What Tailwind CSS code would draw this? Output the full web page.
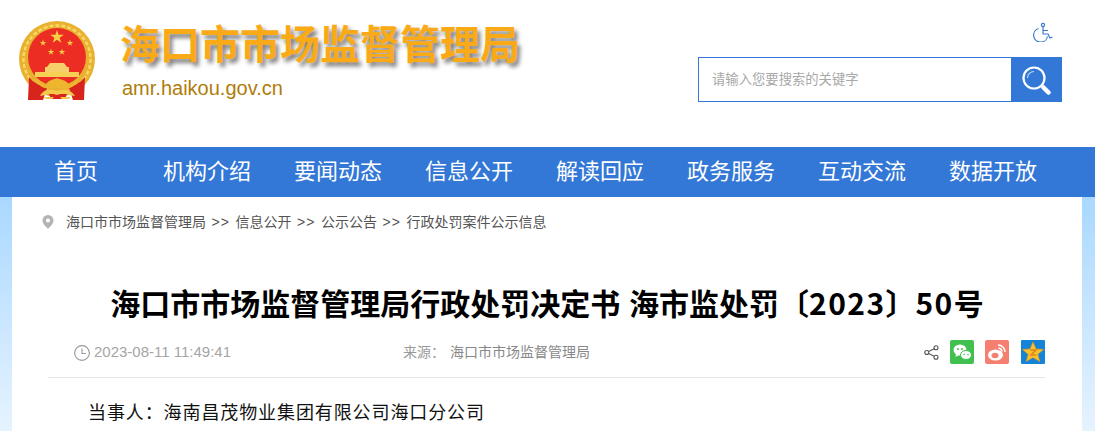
<!DOCTYPE html>
<html lang="zh-CN">
<head>
<meta charset="utf-8">
<title>海口市市场监督管理局行政处罚决定书</title>
<script src="https://cdn.jsdelivr.net/npm/@tailwindcss/browser@4"></script>
</head>
<body class="bg-white overflow-hidden font-['Liberation_Sans','Noto_Sans_CJK_SC',sans-serif]">
  <!-- header -->
  <header class="h-[147px] flex">
    <svg class="w-[78px] h-[82px] ml-[19px] mt-[20px] shrink-0" viewBox="0 0 78 82">
      <defs>
        <polygon id="star" fill="#f7cf45" points="0,-10 2.200,-3.100 9.500,-3.100 3.600,1.200 5.900,8.100 0,3.800 -5.900,8.100 -3.600,1.200 -9.500,-3.100 -2.200,-3.100"/>
      </defs>
      <circle cx="38" cy="39" r="38" fill="#e8b130"/>
      <circle cx="38" cy="39" r="33.500" fill="none" stroke="#f8d763" stroke-width="2.500" stroke-dasharray="4 2"/>
      <circle cx="38" cy="37" r="29" fill="#ec2d24"/>
      <use href="#star" transform="translate(38 17) scale(.72)"/>
      <use href="#star" transform="translate(24 23) scale(.34)"/>
      <use href="#star" transform="translate(51 23) scale(.34)"/>
      <use href="#star" transform="translate(32 32) scale(.34)"/>
      <use href="#star" transform="translate(43 32) scale(.34)"/>
      <path fill="#f6cf6b" d="M31 43 h14 l3 4 h-20z M26 47 h24 v5 H26z"/>
      <path fill="#f6cf55" d="M16 52 h44 v5 H16z"/>
      <path fill="#fff" d="M6 77 H72 V82 H6z"/>
      <path fill="#d8241c" d="M10 57 C16 64 22 66 28 68 L24 80 H9z M66 57 C60 64 54 66 50 68 L54 80 H65z M30 74 H48 L46 79 H32z"/>
      <path fill="none" stroke="#eeb62f" stroke-width="2.400" d="M17 60 C22 66 27 68 31 67 M59 60 C54 66 49 68 45 67"/>
      <path fill="#eeb62f" d="M27 64 C31 59 34 60 38 58 C42 60 45 59 50 64 L46 68 H31z"/>
      <path fill="#f4c94a" d="M21 76 C25 69 31 69 38 71 C45 69 51 69 56 76 L50 75 C46 73 42 74 38 75 C34 74 30 73 26 75z"/>
      <path fill="#f4c94a" d="M25 77 H35 L33 79 H27z M41 77 H52 L50 79 H43z"/>
    </svg>
    <div class="ml-[23px] mt-[20px] w-[420px] shrink-0">
      <h1 class="text-[40px] leading-[50px] font-bold text-[#faaa17] whitespace-nowrap [text-shadow:3px_4px_4px_rgba(0,0,0,0.5)]">海口市市场监督管理局</h1>
      <p class="text-[20px] leading-[24px] mt-[6px] pl-[2px] text-[#b07c0a]">amr.haikou.gov.cn</p>
    </div>
    <div class="ml-auto mr-[33px] w-[364px] flex flex-col items-end">
      <svg class="w-[20px] h-[20px] mt-[22px] mr-[9px]" viewBox="0 0 20 20" fill="none" stroke="#3a7bd5" stroke-width="1.200">
        <circle cx="10" cy="3" r="1.600"/>
        <path d="M5.500 6.500 A7 7 0 1 0 14.500 14.500"/>
        <path d="M10 5 V12 H15 L17 16 L19.500 15 M10 8.500 H15"/>
      </svg>
      <form class="mt-[15px] w-[364px] h-[45px] flex border border-[#3378d6]">
        <input type="text" placeholder="请输入您要搜索的关键字" class="flex-1 min-w-0 pl-[13px] text-[13.330px] outline-none placeholder:text-[#a8a8a8] bg-white">
        <button type="button" class="w-[50px] bg-[#3378d6] flex items-center justify-center">
          <svg class="w-[30px] h-[30px]" viewBox="0 0 30 30" fill="none" stroke="#fff">
            <circle cx="13" cy="13" r="10.500" stroke-width="2.200"/>
            <path d="M6.500 13 A6.500 6.500 0 0 1 13 6.500" stroke-width="1.200" opacity=".7"/>
            <path d="M22.500 22.500 L27.500 27.500" stroke-width="4.500" stroke-linecap="round"/>
          </svg>
        </button>
      </form>
    </div>
  </header>

  <!-- nav -->
  <nav class="h-[50px] bg-[#3378d6] flex pl-[54px] text-white text-[22px] leading-[50px] whitespace-nowrap">
    <a class="w-[109px]">首页</a>
    <a class="w-[131px]">机构介绍</a>
    <a class="w-[131px]">要闻动态</a>
    <a class="w-[131px]">信息公开</a>
    <a class="w-[131px]">解读回应</a>
    <a class="w-[131px]">政务服务</a>
    <a class="w-[131px]">互动交流</a>
    <a class="w-[89px]">数据开放</a>
  </nav>

  <!-- page body -->
  <div class="h-[234px] pl-[12px] pr-[13px] bg-linear-to-b from-[#a9d8ff] to-[#e6f3ff] overflow-hidden">
    <main class="bg-white h-full">
      <div class="flex items-center h-[50px] pl-[30px] text-[14px] text-[#555]">
        <svg class="w-[12px] h-[14px] mr-[12px]" viewBox="0 0 12 14">
          <path fill-rule="evenodd" fill="#b4b4b4" d="M6 0 A5.500 5.500 0 0 1 11.500 5.500 C11.500 9 8 11.500 6 14 C4 11.500 .5 9 .5 5.500 A5.500 5.500 0 0 1 6 0z M6 3.500 a2 2 0 1 0 .01 0z"/>
        </svg>
        <span>海口市市场监督管理局</span>
        <span class="w-[29.500px] text-center tracking-[1px]">&gt;&gt;</span>
        <span>信息公开</span>
        <span class="w-[29.500px] text-center tracking-[1px]">&gt;&gt;</span>
        <span>公示公告</span>
        <span class="w-[29.500px] text-center tracking-[1px]">&gt;&gt;</span>
        <span>行政处罚案件公示信息</span>
      </div>
      <h2 class="mt-[37px] text-center text-[30px] leading-[36px] font-bold text-black whitespace-nowrap [word-spacing:2px] font-['Noto_Sans_CJK_SC',sans-serif]">海口市市场监督管理局行政处罚决定书 海市监处罚〔<span class="tracking-[1.400px]">2023</span>〕<span class="tracking-[1.400px]">50</span>号</h2>
      <div class="ml-[36px] mr-[37px] mt-[19px] h-[39px] border-b border-[#e4e4e4] flex items-start text-[15px] leading-[20px] text-[#a5a5a5]">
        <svg class="w-[16px] h-[16px] mt-[6px] ml-[26px] mr-[4px]" viewBox="0 0 16 16" fill="none" stroke="#999" stroke-width="1.100">
          <circle cx="8" cy="8" r="7.400"/><path d="M8 3.500 V8.500 H12"/>
        </svg>
        <span class="mt-[3px]">2023-08-11 11:49:41</span>
        <span class="mt-[3px] ml-[172px] text-[14px] text-[#999]">来源：</span>
        <span class="mt-[3px] ml-[5px] text-[14px] text-[#888]">海口市市场监督管理局</span>
        <div class="ml-auto mt-[1px] flex items-center">
          <svg class="w-[15px] h-[15px] mr-[11px]" viewBox="0 0 15 15" fill="none" stroke="#555" stroke-width="1.100">
            <circle cx="2.800" cy="7.500" r="2"/><circle cx="12" cy="2.800" r="2"/><circle cx="12" cy="12.200" r="2"/><path d="M4.600 6.500 L10.200 3.700 M4.600 8.500 L10.200 11.300"/>
          </svg>
          <svg class="w-[24px] h-[24px] mr-[11px]" viewBox="0 0 24 24">
            <rect width="24" height="24" rx="2" fill="#3fc04f"/>
            <ellipse cx="10" cy="10" rx="6.500" ry="5.500" fill="#fff"/>
            <path d="M6 14 L5.500 17 L9 15z" fill="#fff"/>
            <ellipse cx="16" cy="15" rx="5.500" ry="4.500" fill="#fff" stroke="#3fc04f"/>
            <circle cx="8" cy="9" r="1" fill="#3fc04f"/><circle cx="12" cy="9" r="1" fill="#3fc04f"/>
            <circle cx="14" cy="14.500" r=".8" fill="#3fc04f"/><circle cx="18" cy="14.500" r=".8" fill="#3fc04f"/>
          </svg>
          <svg class="w-[24px] h-[24px] mr-[12px]" viewBox="0 0 24 24">
            <rect width="24" height="24" rx="2" fill="#f57f70"/>
            <ellipse cx="10.500" cy="15" rx="7.500" ry="5.500" fill="#fff"/>
            <ellipse cx="10" cy="15.500" rx="3.500" ry="2.800" fill="#f57f70"/>
            <path d="M13 5 A7 7 0 0 1 20 12 M13.500 8 A4 4 0 0 1 17 11.500" fill="none" stroke="#fff" stroke-width="1.600"/>
          </svg>
          <svg class="w-[24px] h-[24px]" viewBox="0 0 24 24">
            <rect width="24" height="24" rx="1" fill="#1583d8"/>
            <polygon fill="#fbc02d" stroke="#e89a12" stroke-width=".6" points="12,2 15,9 22.500,9.500 16.800,14.300 18.800,21.500 12,17.500 5.200,21.500 7.200,14.300 1.500,9.500 9,9"/>
            <path d="M9 10 H15 L10 15 H15.500" fill="none" stroke="#e0871a" stroke-width="1.600"/>
          </svg>
        </div>
      </div>
      <p class="mt-[23px] pl-[76px] text-[18px] leading-[24px] tracking-[0.9px] text-[#111]">当事人：海南昌茂物业集团有限公司海口分公司</p>
    </main>
  </div>
</body>
</html>
